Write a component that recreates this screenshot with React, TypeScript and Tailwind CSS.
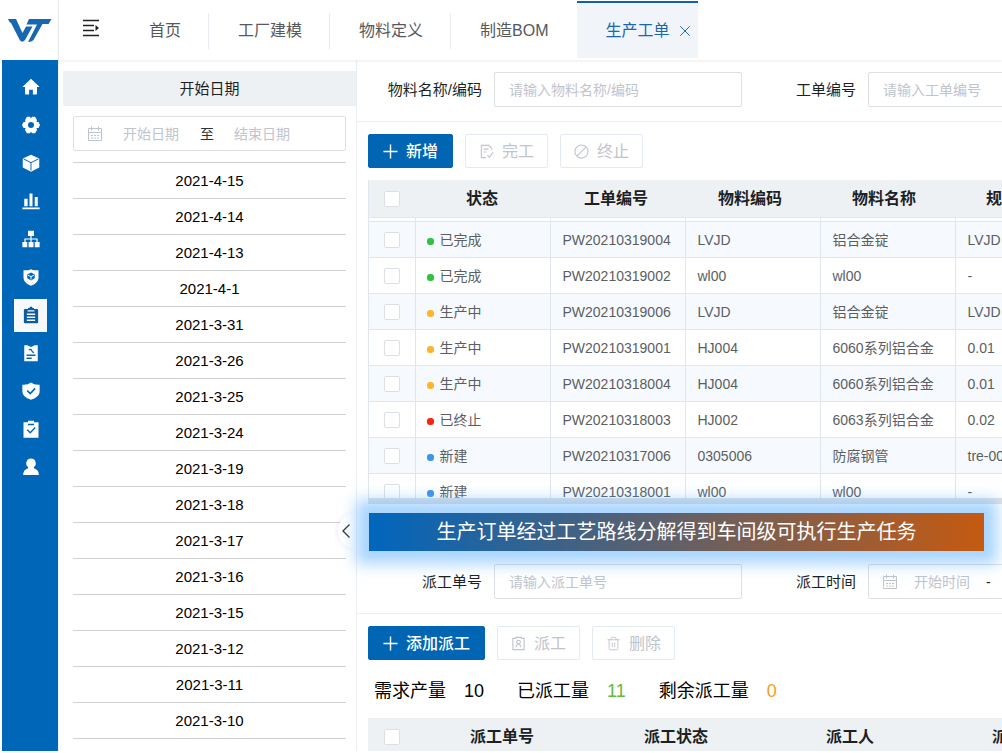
import React from "react";
import { Trash2, X } from "lucide-react";

interface WorkOrder {
    status: string;
    code: string;
    material: string;
    name: string;
    spec: string;
}

const tabs = ["首页", "工厂建模", "物料定义", "制造BOM"];

const dates = [
    "2021-4-15", "2021-4-14", "2021-4-13", "2021-4-1", "2021-3-31", "2021-3-26",
    "2021-3-25", "2021-3-24", "2021-3-19", "2021-3-18", "2021-3-17", "2021-3-16",
    "2021-3-15", "2021-3-12", "2021-3-11", "2021-3-10", "2021-3-9",
];

const orders: WorkOrder[] = [
    { status: "已完成", code: "PW20210319004", material: "LVJD", name: "铝合金锭", spec: "LVJD" },
    { status: "已完成", code: "PW20210319002", material: "wl00", name: "wl00", spec: "-" },
    { status: "生产中", code: "PW20210319006", material: "LVJD", name: "铝合金锭", spec: "LVJD" },
    { status: "生产中", code: "PW20210319001", material: "HJ004", name: "6060系列铝合金", spec: "0.01" },
    { status: "生产中", code: "PW20210318004", material: "HJ004", name: "6060系列铝合金", spec: "0.01" },
    { status: "已终止", code: "PW20210318003", material: "HJ002", name: "6063系列铝合金", spec: "0.02" },
    { status: "新建", code: "PW20210317006", material: "0305006", name: "防腐钢管", spec: "tre-001" },
    { status: "新建", code: "PW20210318001", material: "wl00", name: "wl00", spec: "-" },
];

const getStatusColorClass = (status: string) => {
    switch (status) {
        case "已完成": return "bg-[#2fc240]";
        case "生产中": return "bg-[#ffb52b]";
        case "已终止": return "bg-[#f5260f]";
        default: return "bg-[#3c95ee]";
    }
};

// Sidebar icons, "var(--bg)" cuts the inner details out of the white shapes
const menu = [
    { label: "首页", icon: <path d="M12 1 .5 12H4v9a1 1 0 0 0 1 1h4.500v-6.500h5V22H19a1 1 0 0 0 1-1v-9h3.500z" /> },
    {
        label: "系统设置",
        icon: (
            <path
                fillRule="evenodd"
                d="M6.500 1h4L12 3l1.500-2h4L20 5.500 19.300 8H22l2 4-2 4h-2.700l.7 2.500-2.500 4.500h-4L12 21l-1.500 2h-4L4 18.500 4.700 16H2l-2-4 2-4h2.700L4 5.500zM12 8a4 4 0 1 0 0 8 4 4 0 0 0 0-8z"
            />
        ),
    },
    {
        label: "物料",
        icon: (
            <>
                <path d="M12 1 23 6v12L12 23.500 1 18V6z" />
                <path d="M2 6.500 12 11.500l10-5M12 11.500V22" fill="none" stroke="var(--bg)" strokeWidth="1.300" />
            </>
        ),
    },
    { label: "统计", icon: <path d="M3 9h4.500v10H3zM10 2h4v17h-4zM17 6.500h4V19h-4zM0.500 20.500h23V23H.5z" /> },
    {
        label: "组织",
        icon: (
            <>
                <path d="M8 1h8v7H8zM.5 16h6.500v7H.5zM8.800 16h6.500v7H8.800zM17 16h6.500v7H17z" />
                <path d="M12 8v8M4 16v-4h16v4" fill="none" stroke="currentColor" strokeWidth="1.600" />
            </>
        ),
    },
    {
        label: "质量",
        icon: (
            <>
                <path d="M2 3Q8 3.500 12 1.500 16 3.500 22 3v10q0 7-10 10.500Q2 20 2 13z" />
                <path d="m12 6 5 2.500v5L12 16.500l-5-3v-5z" fill="var(--bg)" />
                <path d="m8 9.500 4 2 4-2M12 11.500v4" fill="none" stroke="currentColor" strokeWidth="1.300" />
            </>
        ),
    },
    {
        label: "生产工单",
        icon: (
            <>
                <path d="M4 4h4V2.500h2a2 2 0 0 1 4 0h2V4h4a1.500 1.500 0 0 1 1.500 1.500v16A1.500 1.500 0 0 1 20 23H4a1.500 1.500 0 0 1-1.500-1.500v-16A1.500 1.500 0 0 1 4 4z" />
                <path d="M7.500 6.500h9M6.500 11h11M6.500 15h11M6.500 19h11" fill="none" stroke="var(--bg)" strokeWidth="1.700" />
            </>
        ),
    },
    {
        label: "人员档案",
        icon: (
            <>
                <path d="M3 1.500h4L12 4l5-2.500h4v21.500H3z" />
                <path d="M9 8q3-2 4 1 1 2 3 2.500M6 15h12M6 19h7" fill="none" stroke="var(--bg)" strokeWidth="1.800" />
            </>
        ),
    },
    {
        label: "安全",
        icon: (
            <>
                <path d="M.5 3.500Q8 4 12 .5q4 3.500 11.500 3V13q0 7-11.500 10.500Q.5 20 .5 13z" />
                <path d="m7 11.500 4 4 6.500-7" fill="none" stroke="var(--bg)" strokeWidth="2" />
            </>
        ),
    },
    {
        label: "检验",
        icon: (
            <>
                <path d="M2 3h6V1h8v2h6v20.500H2z" />
                <path d="M8 6h8M7 13l4 4 6.500-7" fill="none" stroke="var(--bg)" strokeWidth="1.800" />
            </>
        ),
    },
    {
        label: "用户",
        icon: <path d="M12 .5A6.500 6.500 0 0 1 16 12q-1 1.500.5 2 6 2 6 8.500h-21q0-6.500 6-8.500 1.500-.5.5-2A6.500 6.500 0 0 1 12 .5z" />,
    },
];

const Logo = () => (
    <svg viewBox="0 0 44 23" className="h-[23px] w-11" fill="#1767b1">
        <path d="M0 0h8l6.500 14L18 7.500h6.500L17 21q-2.500 3-5 .5L3 4Q1 3 0 0z" />
        <path d="M21 0h22.500l-3 5h-6l-9 16q-1.500 2-5.500 2l9-17.500H18.500z" />
    </svg>
);

const OutlineIcon = ({ children }: { children: React.ReactNode }) => (
    <svg viewBox="0 0 16 16" className="size-[15px] shrink-0" fill="none" stroke="currentColor" strokeWidth="1.200" aria-hidden="true">
        {children}
    </svg>
);

const PlusIcon = () => (
    <OutlineIcon><path d="M8 .5v15M.5 8h15" strokeWidth="1.500" /></OutlineIcon>
);

const CalendarIcon = () => (
    <svg viewBox="0 0 16 16" className="size-4 shrink-0 text-[#bfc4cd]" fill="none" stroke="currentColor" aria-hidden="true">
        <path d="M1.500 2.500h13v12h-13zM1.500 6.500h13M4.500 .5v4M11.500 .5v4" />
        <path d="M4 9.500h2M7 9.500h2M10 9.500h2M4 12h2M7 12h2M10 12h2" />
    </svg>
);

const Check = ({ label }: { label: string }) => (
    <input
        type="checkbox"
        aria-label={label}
        className="block size-4 appearance-none rounded-xs border border-[#dcdfe6] bg-white checked:bg-[#0066b8]"
    />
);

const primary = "flex h-[34px] items-center gap-2 rounded-xs border border-[#0066b3] bg-[#0066b3] px-[14px] pt-px font-medium text-white";
const plain = "flex h-[34px] items-center gap-2 rounded-xs border border-[#e3eaf4] bg-white px-[13px] pt-px text-[#c0c4cc]";
const field = "h-[35px] border border-[#dcdfe6] rounded-xs bg-white text-sm placeholder:text-[#bfc4cd]";

const Field = ({ id, label, placeholder }: { id: string; label: string; placeholder: string }) => (
    <div className="flex shrink-0 items-center">
        <label htmlFor={id} className="w-[126px] pr-3 text-right text-[15px]">{label}</label>
        <input id={id} placeholder={placeholder} className={`${field} w-[248px] px-[14px]`} />
    </div>
);

const HeadTable = ({ columns, cell }: { columns: string[]; cell: string }) => (
    <table className="table-fixed border-collapse bg-[#eef1f4]">
        <thead>
            <tr className="h-[37px]">
                <th className="w-[46px] min-w-[46px] pl-[15px]"><Check label="全选" /></th>
                {columns.map((column) => (
                    <th key={column} className={`${cell} text-base font-bold text-[#1c1f24]`}>{column}</th>
                ))}
            </tr>
        </thead>
    </table>
);

const Sidebar = () => (
    <nav className="flex w-14 shrink-0 flex-col bg-[#0066b8]">
        <a href="#" aria-label="主页" className="flex h-[60px] items-center justify-center bg-white">
            <Logo />
        </a>
        <ul className="pt-2 pl-px">
            {menu.map((item) => {
                const active = item.label === "生产工单";
                return (
                    <li key={item.label} className="flex h-[38px] items-center justify-center">
                        <button
                            aria-label={item.label}
                            className={`flex size-[33px] items-center justify-center ${active ? "bg-[#f8f9fa] text-[#0a5ca3] [--bg:#f8f9fa]" : "text-white [--bg:#0066b8]"}`}
                        >
                            <svg viewBox="0 0 24 24" className="size-[18px]" fill="currentColor">{item.icon}</svg>
                        </button>
                    </li>
                );
            })}
        </ul>
    </nav>
);

const Header = () => (
    <header className="relative z-10 flex h-[60px] shrink-0 bg-white pl-[23px] shadow-[0_1px_3px_rgba(0,0,0,0.08)]">
        <button aria-label="收起菜单" className="mr-5">
            <svg viewBox="0 0 18 18" className="mb-1 size-[18px]" fill="none" stroke="#222" strokeWidth="1.300">
                <path d="M1 1.500h16M1 6.500h11M1 11.500h11M1 16.500h16" />
                <path d="m13.500 6 3.500 3-3.500 3z" fill="#222" stroke="none" />
            </svg>
        </button>
        <div className="flex items-center pt-px">
            {tabs.map((tab) => (
                <a
                    key={tab}
                    href="#"
                    className="flex h-9 items-center border-r border-[#e8ebef] pt-px pr-[27px] pl-[29px] whitespace-nowrap text-[#55585d] last:border-transparent"
                >
                    {tab}
                </a>
            ))}
        </div>
        <div className="mt-px flex h-[57px] items-center gap-[6px] border-t-2 border-[#0f62a6] bg-[#f1f5fa] pr-1 pl-[29px] whitespace-nowrap text-[#1767b1]">
            <a href="#">生产工单</a>
            <button aria-label="关闭"><X size={18} strokeWidth={1.3} /></button>
        </div>
    </header>
);

const DatePanel = () => (
    <aside className="relative w-[298px] shrink-0 border-r border-[#e9eef4] pt-[11px] pl-1">
        <h2 className="flex h-[35px] items-center justify-center bg-[#eef1f4] text-[15px]">开始日期</h2>
        <div className="mx-[10px]">
            <div className={`${field} mt-[10px] flex items-center px-[13px]`}>
                <CalendarIcon />
                <input aria-label="开始日期" placeholder="开始日期" className="ml-[10px] w-[76px] text-center placeholder:text-[#bfc4cd]" />
                <span className="mr-2 ml-[11px] text-[#303133]">至</span>
                <input aria-label="结束日期" placeholder="结束日期" className="w-[80px] text-center placeholder:text-[#bfc4cd]" />
            </div>
            <ul className="mt-[11px] text-center text-[15px] text-black">
                {dates.map((date) => (
                    <li key={date} className="flex h-9 items-center justify-center border-t border-[#cfd1d4]">{date}</li>
                ))}
            </ul>
        </div>
        {/* Collapse handle hanging on the panel edge */}
        <button
            aria-label="收起"
            className="absolute top-[453px] right-0 flex h-9 w-[18px] items-center rounded-l-full bg-white pl-1 text-[#333] shadow-[-2px_0_4px_rgba(0,0,0,0.05)]"
        >
            <svg viewBox="0 0 8 14" className="h-[14px] w-2" fill="none" stroke="currentColor" strokeWidth="1.300">
                <path d="M7.500 .5 1 7l6.500 6.500" />
            </svg>
        </button>
    </aside>
);

const OrderTable = () => (
    <div className="ml-[11px] h-[324px] overflow-hidden border-l border-[#dfe6ee]">
        <HeadTable columns={["状态", "工单编号", "物料编码", "物料名称", "规格型号"]} cell="w-[134px] min-w-[134px]" />
        <div className="h-[281px] overflow-hidden">
            <table className="table-fixed border-collapse text-sm text-[#5b5e63]">
                <tbody>
                    <tr className="h-1 border-t border-[#dfe6ee]">
                        {["check", "status", "code", "material", "name", "spec"].map((key) => (
                            <td key={key} className="border-r border-[#dfe6ee]" />
                        ))}
                    </tr>
                    {orders.map((order) => (
                        <tr key={order.code} className="h-9 border-t border-[#dfe6ee] odd:bg-white even:bg-[#f6faff]">
                            <td className="w-[46px] min-w-[46px] border-r border-[#dfe6ee] pl-[15px]"><Check label={order.code} /></td>
                            <td className="w-[135px] min-w-[135px] border-r border-[#dfe6ee] pl-[11px]">
                                <span className={`mr-[6px] inline-block size-[7px] rounded-[3px] ${getStatusColorClass(order.status)}`} />
                                {order.status}
                            </td>
                            <td className="w-[135px] min-w-[135px] border-r border-[#dfe6ee] px-3">{order.code}</td>
                            <td className="w-[135px] min-w-[135px] border-r border-[#dfe6ee] px-3">{order.material}</td>
                            <td className="w-[135px] min-w-[135px] border-r border-[#dfe6ee] px-3">{order.name}</td>
                            <td className="w-[135px] min-w-[135px] border-r border-[#dfe6ee] px-3">{order.spec}</td>
                        </tr>
                    ))}
                </tbody>
            </table>
        </div>
        <div className="h-[6px] bg-[#dfe2e6]" />
    </div>
);

export default function App() {
    return (
        <div className="flex h-screen overflow-hidden bg-white pb-0.5 pl-0.5 font-['Liberation_Sans','Noto_Sans_CJK_SC',sans-serif] text-base leading-5 text-[#1c1f24]">
            <Sidebar />
            <div className="flex min-w-0 flex-1 flex-col border-l border-[#edf0f3]">
                <Header />
                <div className="flex min-h-0 flex-1 overflow-hidden">
                    <DatePanel />
                    <main className="min-w-0 flex-1">
                        <form className="flex border-b border-[#eceff2] pt-3 pb-[14px] pl-[11px]">
                            <Field id="material" label="物料名称/编码" placeholder="请输入物料名称/编码" />
                            <Field id="order" label="工单编号" placeholder="请输入工单编号" />
                        </form>
                        <div className="flex gap-3 py-3 pl-[11px]">
                            <button className={primary}><PlusIcon />新增</button>
                            <button className={plain}>
                                <OutlineIcon>
                                    <path d="M13.500 6V4.500L10.500 1.500H2.500v13h5M5 5.500h5M5 8.500h3M9 12l2 2 4-5" />
                                </OutlineIcon>
                                完工
                            </button>
                            <button className={plain}>
                                <OutlineIcon>
                                    <circle cx="8" cy="8" r="7" />
                                    <path d="M12.500 3.500l-9 9" />
                                </OutlineIcon>
                                终止
                            </button>
                        </div>
                        <OrderTable />
                        <p className="relative mt-[9px] mr-[18px] ml-3 flex h-[38px] items-center justify-center bg-linear-to-r/srgb from-[#0066bd] to-[#c55a11] text-xl whitespace-nowrap text-white shadow-[0_0_14px_13px_rgba(84,172,255,0.5)]">
                            生产订单经过工艺路线分解得到车间级可执行生产任务
                        </p>
                        <form className="flex border-b border-[#eceff2] pt-[13px] pb-[14px] pl-[11px]">
                            <Field id="dispatch" label="派工单号" placeholder="请输入派工单号" />
                            <div className="flex shrink-0 items-center">
                                <label htmlFor="time" className="w-[126px] pr-3 text-right text-[15px]">派工时间</label>
                                <div className={`${field} flex w-[248px] items-center px-[13px]`}>
                                    <CalendarIcon />
                                    <input id="time" placeholder="开始时间" className="ml-3 w-[64px] text-center placeholder:text-[#bfc4cd]" />
                                    <span className="mx-3">-</span>
                                    <input aria-label="结束时间" placeholder="结束时间" className="w-[64px] placeholder:text-[#bfc4cd]" />
                                </div>
                            </div>
                        </form>
                        <div className="flex gap-3 pt-3 pl-[11px]">
                            <button className={primary}><PlusIcon />添加派工</button>
                            <button className={plain}>
                                <OutlineIcon>
                                    <path d="M2 2.500h3v-1h6v1h3v12H2zM5 12l2-3.500h2L11 12" />
                                    <circle cx="8" cy="6.500" r="2" />
                                </OutlineIcon>
                                派工
                            </button>
                            <button className={plain}><Trash2 size={15} strokeWidth={1.5} />删除</button>
                        </div>
                        <dl className="flex items-center pt-5 pb-4 pl-[17px] text-lg leading-[22px] whitespace-nowrap text-black">
                            <dt>需求产量</dt>
                            <dd className="mr-[33px] ml-[18px]">10</dd>
                            <dt>已派工量</dt>
                            <dd className="mr-[33px] ml-[18px] text-[#67b93a]">11</dd>
                            <dt>剩余派工量</dt>
                            <dd className="ml-[18px] text-[#ff9a1a]">0</dd>
                        </dl>
                        <div className="ml-[11px] overflow-hidden border-l border-[#eef1f4]">
                            <HeadTable columns={["派工单号", "派工状态", "派工人", "派工时间"]} cell="w-[174px] min-w-[174px]" />
                        </div>
                    </main>
                </div>
            </div>
        </div>
    );
}
